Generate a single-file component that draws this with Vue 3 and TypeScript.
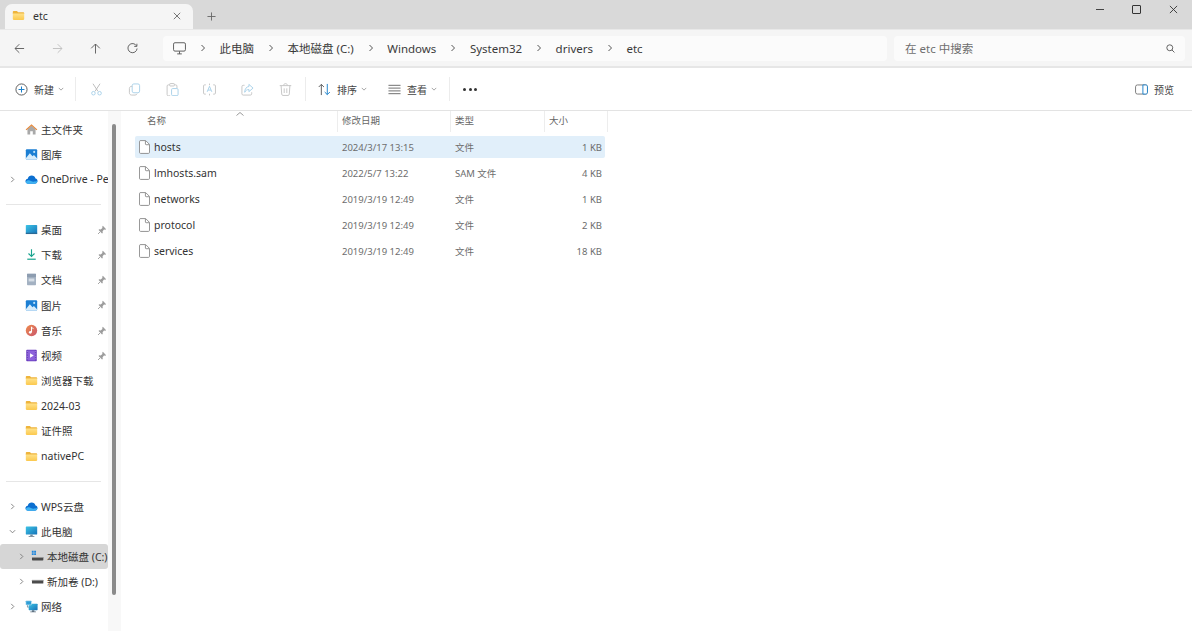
<script setup lang="ts">
interface NavItem { label: string; icon?: string; pin?: boolean; chevron?: 'right' | 'down'; indent?: boolean; selected?: boolean; divider?: boolean }

const crumbs = ['此电脑', '本地磁盘 (C:)', 'Windows', 'System32', 'drivers', 'etc']
const navButtons = [
  { id: 'i-back', muted: false },
  { id: 'i-forward', muted: true },
  { id: 'i-up', muted: false },
  { id: 'i-refresh', muted: false },
]
const editTools = ['i-cut', 'i-copy', 'i-paste', 'i-rename', 'i-share', 'i-trash']

const navGroups: NavItem[][] = [
  [
    { label: '主文件夹', icon: 'i-home' },
    { label: '图库', icon: 'i-gallery' },
    { label: 'OneDrive - Personal', icon: 'i-cloud', chevron: 'right' },
  ],
  [
    { label: '桌面', icon: 'i-desktop', pin: true },
    { label: '下载', icon: 'i-download', pin: true },
    { label: '文档', icon: 'i-doc', pin: true },
    { label: '图片', icon: 'i-gallery', pin: true },
    { label: '音乐', icon: 'i-music', pin: true },
    { label: '视频', icon: 'i-video', pin: true },
    { label: '浏览器下载', icon: 'i-folder' },
    { label: '2024-03', icon: 'i-folder' },
    { label: '证件照', icon: 'i-folder' },
    { label: 'nativePC', icon: 'i-folder' },
  ],
  [
    { label: 'WPS云盘', icon: 'i-cloud', chevron: 'right' },
    { label: '此电脑', icon: 'i-pc', chevron: 'down' },
    { label: '本地磁盘 (C:)', icon: 'i-drive-c', chevron: 'right', indent: true, selected: true },
    { label: '新加卷 (D:)', icon: 'i-drive-d', chevron: 'right', indent: true },
    { label: '网络', icon: 'i-network', chevron: 'right' },
  ],
]

const files = [
  { name: 'hosts', date: '2024/3/17 13:15', type: '文件', size: '1 KB', active: true },
  { name: 'lmhosts.sam', date: '2022/5/7 13:22', type: 'SAM 文件', size: '4 KB', active: false },
  { name: 'networks', date: '2019/3/19 12:49', type: '文件', size: '1 KB', active: false },
  { name: 'protocol', date: '2019/3/19 12:49', type: '文件', size: '2 KB', active: false },
  { name: 'services', date: '2019/3/19 12:49', type: '文件', size: '18 KB', active: false },
]
</script>

<template>
  <div class="window">
    <svg class="defs" aria-hidden="true">
      <defs>
        <linearGradient id="g-folder" x1="0" y1="0" x2="0" y2="1"><stop offset="0" stop-color="#ffe28a" /><stop offset="1" stop-color="#fbc94f" /></linearGradient>
        <linearGradient id="g-desk" x1="0" y1="0" x2="1" y2="1"><stop offset="0" stop-color="#3cc4e6" /><stop offset="1" stop-color="#1773b8" /></linearGradient>
        <symbol id="i-folder" viewBox="0 0 16 16"><path d="M1 3.5C1 3 1.4 2.6 2 2.6h4l1.6 1.5H14c.6 0 1 .4 1 1V6H1z" fill="#eeb43c" /><path d="M1 5.4h14v7c0 .6-.4 1-1 1H2c-.6 0-1-.4-1-1z" fill="url(#g-folder)" /></symbol>
        <symbol id="i-home" viewBox="0 0 16 16"><path d="M3 7.5 8 3l5 4.5V14H9.6v-4H6.4v4H3z" fill="#a9a9a9" /><path d="M.8 8 8 1.4 15.2 8l-1 1L8 3.4 1.8 9z" fill="#e8893a" /></symbol>
        <symbol id="i-gallery" viewBox="0 0 16 16"><rect x="1" y="1.5" width="14" height="13" rx="1.3" fill="#1c7fd3" /><path d="M1 12.5 6 6.5l3.2 3.6L11 8.500l4 4.500V13.200c0 .7-.6 1.300-1.300 1.300H2.300C1.600 14.500 1 13.900 1 13.200z" fill="#d6ecfb" /><circle cx="11.300" cy="4.800" r="1.300" fill="#bfe3fa" /></symbol>
        <symbol id="i-cloud" viewBox="0 0 16 16"><path d="M4 13.200C2 13.200.6 11.800.6 10.100c0-1.600 1.200-2.900 2.800-3.100C4 4.800 5.900 3.200 8.200 3.200c2.300 0 4.200 1.500 4.700 3.600 1.400.2 2.500 1.500 2.500 3 0 1.900-1.500 3.400-3.400 3.400z" fill="#0c6fd0" /><path d="M4 13.200c-1.700 0-3-1-3.300-2.500 1.500-1.500 4-2.600 6.600-.9 1.800 1.200 3.500 1.200 8 .1-.3 1.900-1.700 3.300-3.600 3.300z" fill="#3fb2f2" /></symbol>
        <symbol id="i-desktop" viewBox="0 0 16 16"><rect x="1" y="2.500" width="14" height="11" rx="1" fill="url(#g-desk)" /><rect x="1" y="12" width="14" height="1.600" fill="#2a6a96" /></symbol>
        <symbol id="i-download" viewBox="0 0 16 16"><path d="M8 1.500v8.800M4.300 6.800 8 10.500l3.700-3.700" fill="none" stroke="#1aa48f" stroke-width="1.400" /><path d="M2.800 13.800h10.400" stroke="#1aa48f" stroke-width="1.500" /></symbol>
        <symbol id="i-doc" viewBox="0 0 16 16"><rect x="2.500" y="1" width="11" height="14" rx=".8" fill="#a3b1c2" /><rect x="2.500" y="1" width="11" height="4" fill="#8d9db0" /><rect x="4.500" y="6.800" width="7" height="3.600" fill="#d5dde6" /></symbol>
        <symbol id="i-music" viewBox="0 0 16 16"><defs><linearGradient id="g-mus" x1="0" y1="0" x2="1" y2="1"><stop offset="0" stop-color="#ef8b4c" /><stop offset="1" stop-color="#c9566e" /></linearGradient></defs><circle cx="8" cy="8" r="7" fill="url(#g-mus)" /><path d="M8 3.600v6.300" stroke="#fff" stroke-width="1.300" /><path d="M8 3.600c.8 1.400 2.200 1.300 2.500 2.700" fill="none" stroke="#fff" stroke-width="1" /><circle cx="6.500" cy="10.200" r="1.700" fill="#fff" /></symbol>
        <symbol id="i-video" viewBox="0 0 16 16"><rect x="1.500" y="1" width="13" height="14" rx="1" fill="#6b3fc0" /><rect x="3.800" y="2" width="8.400" height="12" fill="#8d63dc" /><path d="M6.200 5.200v5.600L10.800 8z" fill="#fff" /><path d="M2.300 3h.8M2.300 6h.8M2.300 9h.8M2.300 12h.8M12.900 3h.8M12.900 6h.8M12.900 9h.8M12.900 12h.8" stroke="#d9c9f5" stroke-width="1" /></symbol>
        <symbol id="i-pin" viewBox="0 0 12 12"><path d="M7 1 11 5 9.800 5.700 8.400 5.500 6.700 7.600 6.900 9.600 6 10.200 1.900 6 2.500 5.100 4.400 5.300 6.500 3.600 6.300 2.200z" fill="#9c9c9c" /><path d="M3.600 8.400 1.200 10.800" stroke="#9c9c9c" stroke-width="1.100" /></symbol>
        <symbol id="i-pc" viewBox="0 0 16 16"><rect x="1" y="1.800" width="14" height="10" rx=".8" fill="url(#g-desk)" /><path d="M6.500 11.800h3v1.800h-3z" fill="#6e8a9e" /><path d="M4.500 13.600h7v.9h-7z" fill="#5f7282" /></symbol>
        <symbol id="i-drive-c" viewBox="0 0 16 16"><path d="M1 1h2.300v2.300H1zM3.900 1h2.300v2.300H3.900zM1 3.900h2.300v2.300H1zM3.900 3.900h2.300v2.300H3.900z" fill="#1f86dc" /><rect x="1.200" y="8.600" width="14" height="4.200" rx=".8" fill="#4b4b4b" /><rect x="1.200" y="8.600" width="14" height="1.200" fill="#9a9a9a" /></symbol>
        <symbol id="i-drive-d" viewBox="0 0 16 16"><rect x="1.200" y="6" width="14" height="4.600" rx=".8" fill="#4b4b4b" /><rect x="1.200" y="6" width="14" height="1.200" fill="#9a9a9a" /></symbol>
        <symbol id="i-network" viewBox="0 0 16 16"><rect x="4.500" y="4.500" width="11" height="8" rx=".7" fill="url(#g-desk)" /><path d="M8.500 12.500h3v1.500h2v1h-7v-1h2z" fill="#5f7282" /><rect x="1" y="1" width="7" height="5" rx=".6" fill="#2e9ed6" stroke="#e8f4fb" stroke-width=".6" /><path d="M3 6.300v2.500h1.600" fill="none" stroke="#6e8a9e" /></symbol>
        <symbol id="i-file" viewBox="0 0 12 15"><path d="M1.500.5h5.800l4.200 4.200v8.600c0 .7-.5 1.200-1.200 1.200H1.700c-.7 0-1.200-.5-1.200-1.200V1.700C.5 1 1 .5 1.700.5z" fill="#fff" stroke="#8a8a8a" /><path d="M7 .8v3.400c0 .5.300.8.800.8h3.400" fill="none" stroke="#8a8a8a" /></symbol>

        <symbol id="i-back" viewBox="0 0 12 12"><path d="M11 6H1.200M5.800 1.300 1.100 6l4.700 4.700" fill="none" stroke="currentColor" /></symbol>
        <symbol id="i-forward" viewBox="0 0 12 12"><path d="M1 6h9.800M6.200 1.300 10.900 6l-4.700 4.700" fill="none" stroke="currentColor" /></symbol>
        <symbol id="i-up" viewBox="0 0 12 12"><path d="M6 11.500V1.200M1.300 5.800 6 1.100l4.700 4.700" fill="none" stroke="currentColor" /></symbol>
        <symbol id="i-refresh" viewBox="0 0 12 12"><path d="M10.400 3.200A5 5 0 1 0 11 6" fill="none" stroke="currentColor" /><path d="M10.800 .8v2.900H7.900" fill="none" stroke="currentColor" /></symbol>
        <symbol id="i-monitor" viewBox="0 0 14 14"><rect x=".6" y=".8" width="12.800" height="9" rx="1.500" fill="none" stroke="currentColor" /><path d="M4.500 12.800h5M7 10v2.800" fill="none" stroke="currentColor" /></symbol>
        <symbol id="i-chev-r" viewBox="0 0 8 8"><path d="M2.500 1 5.500 4 2.500 7" fill="none" stroke="currentColor" /></symbol>
        <symbol id="i-chev-d" viewBox="0 0 8 8"><path d="M1 2.500 4 5.500 7 2.500" fill="none" stroke="currentColor" /></symbol>
        <symbol id="i-search" viewBox="0 0 10 10"><circle cx="4.200" cy="4.200" r="3.300" fill="none" stroke="currentColor" /><path d="M6.600 6.600 9.400 9.400" stroke="currentColor" /></symbol>
        <symbol id="i-new" viewBox="0 0 14 14"><circle cx="7" cy="7" r="6" fill="none" stroke="#555" /><path d="M7 3.800v6.400M3.800 7h6.400" stroke="#1a7fc9" stroke-width="1.100" /></symbol>
        <symbol id="i-cut" viewBox="0 0 14 14"><path d="M3.200 .8 8.600 9M10.800 .8 5.400 9" fill="none" stroke="#b9b9b9" /><circle cx="3.700" cy="11" r="1.900" fill="none" stroke="#a6cfe8" /><circle cx="10.300" cy="11" r="1.900" fill="none" stroke="#a6cfe8" /></symbol>
        <symbol id="i-copy" viewBox="0 0 14 14"><rect x="4.500" y="1" width="8" height="9.500" rx="1.800" fill="none" stroke="#a6cfe8" /><path d="M4.500 3.500c-1.800 0-3 .8-3 2.500v4.500c0 1.500 1 2.500 2.500 2.500h3.500c1.300 0 2-.6 2.300-1.500" fill="none" stroke="#c4c4c4" /></symbol>
        <symbol id="i-paste" viewBox="0 0 14 14"><path d="M3.800 2H2.500c-.8 0-1.300.5-1.300 1.300v9.200c0 .8.500 1.300 1.300 1.300h2M9.200 2h1.300c.8 0 1.300.5 1.300 1.300v2.200" fill="none" stroke="#c4c4c4" /><rect x="4" y=".6" width="5" height="2.600" rx=".6" fill="none" stroke="#c4c4c4" /><rect x="6" y="6" width="7" height="7.600" rx="1.200" fill="none" stroke="#a6cfe8" /></symbol>
        <symbol id="i-rename" viewBox="0 0 14 14"><path d="M3 2H1.800C1 2 .6 2.500 .6 3.200v7.600c0 .7.400 1.200 1.200 1.200H3M11 2h1.200c.8 0 1.200.5 1.200 1.200v7.600c0 .7-.4 1.200-1.200 1.200H11" fill="none" stroke="#c4c4c4" /><path d="M4.500 9.500 7 3.600l2.500 5.900M5.400 7.600h3.200" fill="none" stroke="#a6cfe8" /><path d="M7 .6v1.800M7 11.600v1.800" stroke="#c4c4c4" /></symbol>
        <symbol id="i-share" viewBox="0 0 14 14"><path d="M3.800 2.500H2.400C1.500 2.500 1 3 1 3.900v7.700c0 .9.500 1.400 1.400 1.400h7.700c.9 0 1.400-.5 1.400-1.400V10" fill="none" stroke="#c4c4c4" /><path d="M8.500 1.500 13 5.500 8.500 9.300V7C6.500 7 5 8 4 10c0-3.800 2-6 4.500-6.200z" fill="none" stroke="#a6cfe8" /></symbol>
        <symbol id="i-trash" viewBox="0 0 14 14"><path d="M.8 2.800h12.400M5 2.500c0-1 .8-1.800 2-1.800s2 .8 2 1.800M2.300 3l.6 9c0 .8.600 1.400 1.400 1.400h5.400c.8 0 1.400-.6 1.400-1.400l.6-9M5.600 5.800v5M8.400 5.800v5" fill="none" stroke="#c4c4c4" /></symbol>
        <symbol id="i-sort" viewBox="0 0 14 13"><path d="M3.600 12.500V1M.8 3.800 3.600 1l2.800 2.800" fill="none" stroke="#555" /><path d="M10 .5V12M7.200 9.200 10 12l2.800-2.800" fill="none" stroke="#1a7fc9" /></symbol>
        <symbol id="i-view" viewBox="0 0 14 12"><path d="M.5 1.500h13M.5 4.500h13M.5 7.500h13M.5 10.500h13" stroke="#666" /></symbol>
        <symbol id="i-preview" viewBox="0 0 14 11"><rect x=".6" y=".6" width="12.800" height="9.800" rx="2" fill="none" stroke="#777" /><path d="M8.500 .6h3c1.200 0 1.900.7 1.900 1.900v6c0 1.200-.7 1.900-1.900 1.900h-3z" fill="#fff" stroke="#1a7fc9" /></symbol>
        <symbol id="i-x" viewBox="0 0 10 10"><path d="M1 1 9 9M9 1 1 9" stroke="currentColor" fill="none" /></symbol>
        <symbol id="i-plus" viewBox="0 0 10 10"><path d="M5 .5v9M.5 5h9" stroke="currentColor" fill="none" /></symbol>
      </defs>
    </svg>

    <header class="titlebar">
      <div class="tab">
        <svg class="tab-folder"><use href="#i-folder" /></svg>
        <span class="tab-title">etc</span>
        <svg class="tab-close"><use href="#i-x" /></svg>
      </div>
      <svg class="tab-add"><use href="#i-plus" /></svg>
      <div class="win-controls">
        <span class="win-btn"><i class="win-min"></i></span>
        <span class="win-btn"><i class="win-max"></i></span>
        <span class="win-btn"><svg class="win-close"><use href="#i-x" /></svg></span>
      </div>
    </header>

    <div class="addressbar">
      <div class="nav-buttons">
        <span v-for="b in navButtons" :key="b.id" class="nav-btn" :class="{ muted: b.muted }">
          <svg><use :href="'#' + b.id" /></svg>
        </span>
      </div>
      <div class="breadcrumb">
        <svg class="monitor"><use href="#i-monitor" /></svg>
        <template v-for="c in crumbs" :key="c">
          <svg class="crumb-sep"><use href="#i-chev-r" /></svg>
          <span class="crumb">{{ c }}</span>
        </template>
      </div>
      <div class="search">
        <span class="search-text">在 etc 中搜索</span>
        <svg class="search-icon"><use href="#i-search" /></svg>
      </div>
    </div>

    <div class="toolbar">
      <div class="tool-new">
        <svg class="t-icon"><use href="#i-new" /></svg>
        <span class="t-label">新建</span>
        <svg class="t-chev"><use href="#i-chev-d" /></svg>
      </div>
      <i class="t-sep"></i>
      <div class="edit-tools">
        <svg v-for="t in editTools" :key="t" class="t-icon"><use :href="'#' + t" /></svg>
      </div>
      <i class="t-sep"></i>
      <div class="tool-sort">
        <svg class="t-icon"><use href="#i-sort" /></svg>
        <span class="t-label">排序</span>
        <svg class="t-chev"><use href="#i-chev-d" /></svg>
      </div>
      <div class="tool-view">
        <svg class="t-icon"><use href="#i-view" /></svg>
        <span class="t-label">查看</span>
        <svg class="t-chev"><use href="#i-chev-d" /></svg>
      </div>
      <i class="t-sep"></i>
      <div class="more"><i></i><i></i><i></i></div>
      <div class="tool-preview">
        <svg class="t-icon"><use href="#i-preview" /></svg>
        <span class="t-label">预览</span>
      </div>
    </div>

    <main class="content">
      <aside class="sidebar">
        <template v-for="(group, gi) in navGroups" :key="gi">
          <div v-if="gi > 0" class="nav-divider"></div>
          <div
            v-for="item in group"
            :key="item.label"
            class="nav-row"
            :class="{ indent: item.indent, selected: item.selected }"
          >
            <span class="nav-chev">
              <svg v-if="item.chevron"><use :href="item.chevron === 'down' ? '#i-chev-d' : '#i-chev-r'" /></svg>
            </span>
            <svg class="nav-icon"><use :href="'#' + item.icon" /></svg>
            <span class="nav-label">{{ item.label }}</span>
            <svg v-if="item.pin" class="nav-pin"><use href="#i-pin" /></svg>
          </div>
        </template>
      </aside>
      <div class="scroll-track"><div class="scroll-thumb"></div></div>
      <section class="files">
        <div class="list-head">
          <div class="col col-name">名称<svg class="sort-caret" viewBox="0 0 8 4"><path d="M.5 3.500 4 .5l3.500 3" fill="none" stroke="#999" /></svg></div>
          <div class="col col-date">修改日期</div>
          <div class="col col-type">类型</div>
          <div class="col col-size">大小</div>
        </div>
        <div class="rows">
          <div v-for="f in files" :key="f.name" class="file-row" :class="{ active: f.active }">
            <div class="cell-name"><svg class="file-icon"><use href="#i-file" /></svg>{{ f.name }}</div>
            <div class="cell cell-date">{{ f.date }}</div>
            <div class="cell cell-type">{{ f.type }}</div>
            <div class="cell cell-size">{{ f.size }}</div>
          </div>
        </div>
      </section>
    </main>
  </div>
</template>

<style>
html, body { margin: 0; background: #fff; overflow: hidden; }
</style>

<style scoped>
.window {
  width: 1192px;
  height: 631px;
  overflow: hidden;
  display: flex;
  flex-direction: column;
  background: #fff;
  color: #333;
  font-family: "Noto Sans", "Noto Sans CJK SC", sans-serif;
  font-size: 10.5px;
}
.defs { position: absolute; width: 0; height: 0; }
i { display: block; font-style: normal; }

/* Title bar */
.titlebar {
  height: 29px;
  flex: none;
  display: flex;
  align-items: flex-end;
  background: #d9d9d9;
  padding-left: 5px;
  border-bottom: 1px solid #e8e8e8;
}
.tab {
  width: 188px;
  height: 25px;
  background: #f5f5f5;
  border-radius: 7px 7px 0 0;
  display: flex;
  align-items: center;
  padding: 0 11px 2px 7px;
  box-sizing: border-box;
}
.tab-folder { width: 13px; height: 13px; margin-right: 8px; }
.tab-title { font-size: 10.5px; flex: 1; }
.tab-close { width: 8px; height: 8px; color: #555; margin-right: 1px; }
.tab-add { width: 9px; height: 9px; color: #666; margin: 0 0 8px 14px; }
.win-controls { margin-left: auto; align-self: flex-start; display: flex; padding-right: 0; }
.win-btn { width: 37px; height: 19px; display: flex; align-items: center; justify-content: center; }
.win-min { width: 8px; height: 1px; background: #444; }
.win-max { width: 7px; height: 7px; border: 1px solid #333; border-radius: 1px; }
.win-close { width: 9px; height: 9px; color: #333; }

/* Address bar */
.addressbar {
  height: 36px;
  flex: none;
  display: flex;
  align-items: center;
  gap: 7px;
  background: #f5f5f5;
  border-bottom: 2px solid #e6e6e6;
  padding: 0 7px 0 0;
  box-sizing: border-box;
  height: 38px;
}
.nav-buttons { display: flex; padding-left: 1px; width: 156px; flex: none; box-sizing: border-box; }
.nav-btn { width: 37.7px; display: flex; justify-content: center; color: #5a5a5a; }
.nav-btn.muted { color: #bdbdbd; }
.nav-btn svg { width: 11px; height: 11px; }
.breadcrumb {
  width: 724px;
  height: 25px;
  flex: none;
  display: flex;
  align-items: center;
  background: #fbfbfb;
  border-radius: 4px;
  padding-left: 10px;
  box-sizing: border-box;
  font-size: 11.5px;
  color: #3a3a3a;
}
.monitor { width: 13px; height: 13px; color: #555; }
.crumb-sep { width: 8px; height: 8px; color: #555; margin: 0 12.5px 0 13px; }
.crumb-sep:first-of-type { margin-right: 13px; }
.search {
  flex: 1;
  height: 25px;
  display: flex;
  align-items: center;
  justify-content: space-between;
  background: #fbfbfb;
  border-radius: 4px;
  padding: 0 10px 0 11px;
  font-size: 11.5px;
  color: #6e6e6e;
}
.search-icon { width: 9px; height: 9px; color: #555; }

/* Toolbar */
.toolbar {
  height: 43px;
  flex: none;
  display: flex;
  align-items: center;
  border-bottom: 1px solid #e3e3e3;
  box-sizing: border-box;
  padding-left: 15px;
  padding-right: 18px;
  font-size: 10px;
}
.t-icon { width: 13px; height: 13px; flex: none; }
.t-label { color: #444; margin-left: 6px; }
.t-chev { width: 6px; height: 6px; color: #888; margin-left: 4px; }
.tool-new, .tool-sort, .tool-view, .tool-preview { display: flex; align-items: center; }
.t-sep { width: 1px; height: 24px; background: #ececec; flex: none; }
.tool-new { width: 60px; }
.edit-tools { width: 229px; box-sizing: border-box; padding-left: 14px; display: flex; gap: 24.8px; }
.tool-sort { width: 70px; padding-left: 12px; }
.tool-view { width: 61px; }
.tool-sort { margin-right: 0; }
.more { display: flex; gap: 2.5px; margin-left: 13px; }
.more i { width: 3px; height: 3px; border-radius: 50%; background: #333; }
.tool-preview { margin-left: auto; }

/* Main */
.content { flex: 1; display: flex; min-height: 0; }
.sidebar {
  width: 108px;
  flex: none;
  box-sizing: border-box;
  padding-top: 5.5px;
  overflow: hidden;
}
.nav-row {
  height: 25.2px;
  display: flex;
  align-items: center;
  position: relative;
  border-radius: 3px;
  white-space: nowrap;
  overflow: hidden;
  color: #333;
}
.nav-row.selected { background: #d6d6d6; }
.nav-chev { width: 25px; flex: none; display: flex; justify-content: center; color: #777; padding-right: 1px; box-sizing: border-box; }
.nav-chev svg { width: 7px; height: 7px; }
.nav-row.indent .nav-chev { width: 31px; padding-left: 12px; padding-right: 1px; }
.nav-icon { width: 13px; height: 13px; flex: none; margin-right: 3px; }
.nav-pin { position: absolute; right: 1px; top: 8px; width: 10px; height: 10px; }
.nav-divider { height: 24.8px; display: flex; align-items: center; margin: 0 7px 0 6px; position: relative; }
.nav-divider::after { content: ""; display: block; width: 100%; height: 1px; background: #e6e6e6; }
.scroll-track { width: 13px; flex: none; background: #f8f8f8; padding: 13px 5px 0 4px; box-sizing: border-box; }
.scroll-thumb { height: 471px; background: #8b8b8b; border-radius: 2px; }

/* File list */
.files { flex: 1; padding-left: 14px; }
.list-head { height: 21px; display: flex; color: #666; font-size: 9.5px; line-height: 20px; }
.col { box-sizing: border-box; position: relative; border-right: 1px solid #ededed; padding-left: 4px; }
.col-name { width: 203px; padding-left: 12px; }
.col-date { width: 113px; }
.col-type { width: 94px; }
.col-size { width: 63px; }
.sort-caret { position: absolute; left: 101px; top: 1px; width: 8px; height: 4px; }
.rows { padding-top: 4px; display: flex; flex-direction: column; gap: 4px; width: 470px; }
.file-row { height: 22px; display: flex; align-items: center; border-radius: 2px; }
.file-row.active { background: #e1effa; }
.cell-name { width: 202px; flex: none; display: flex; align-items: center; font-size: 10.5px; color: #333; box-sizing: border-box; padding-left: 4px; }
.file-icon { width: 11px; height: 14px; margin-right: 4px; }
.cell { font-size: 9.5px; color: #6d6d6d; white-space: nowrap; box-sizing: border-box; }
.cell-date { width: 113px; padding-left: 5px; }
.cell-type { width: 94px; padding-left: 5px; }
.cell-size { width: 58px; text-align: right; }
</style>
